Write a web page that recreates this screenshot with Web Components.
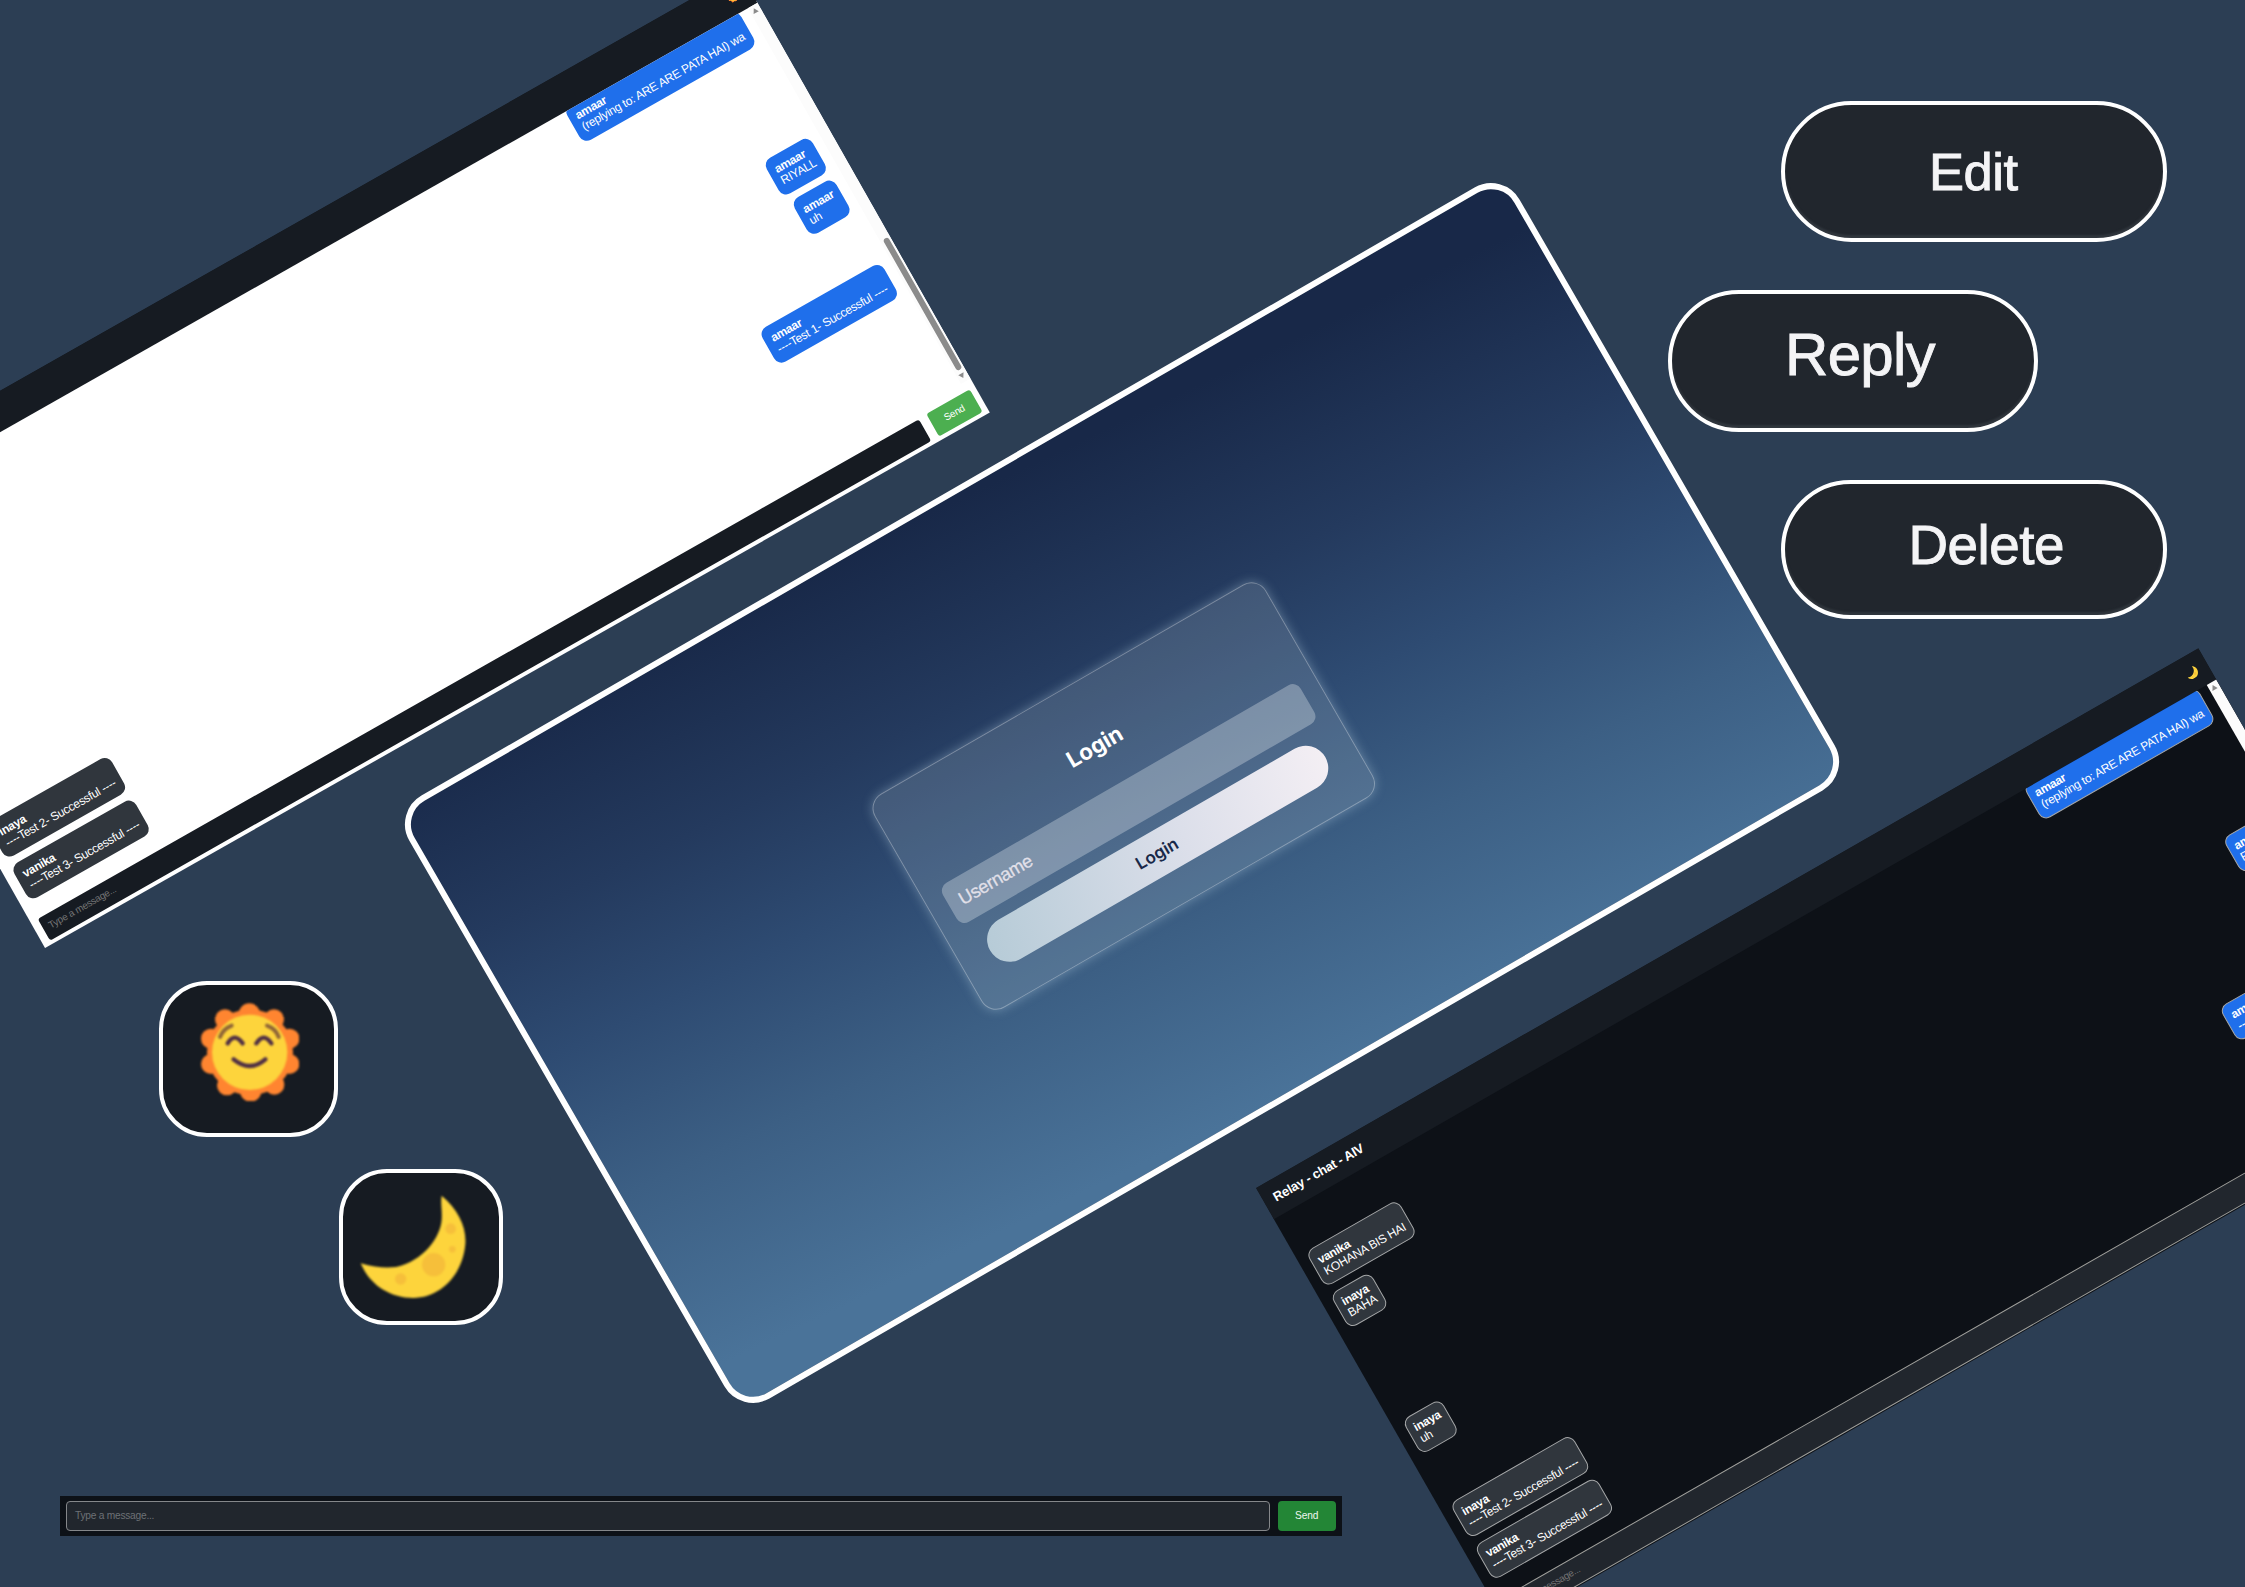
<!DOCTYPE html>
<html lang="en">
<head>
<meta charset="utf-8">
<title>Relay chat</title>
<style>
html,body{margin:0;height:100%;overflow:hidden;background:#2c3e54}
body{font-family:"Liberation Sans",Arial,sans-serif;color:#fff}
</style>
</head>
<body>
<relay-board></relay-board>
<script>
function define(name, html){
  const t = document.createElement('template');
  t.innerHTML = html;
  customElements.define(name, class extends HTMLElement{
    constructor(){ super(); this.attachShadow({mode:'open'}).append(t.content.cloneNode(true)); }
  });
}

define('sun-icon', `
<style>:host{display:block}svg{display:block;width:100%;height:100%}</style>
<svg viewBox="182 129 296 296">
  <g fill="#ff8530">
    <circle cx="329" cy="277" r="129"/>
    <circle cx="327" cy="162" r="32"/><circle cx="401" cy="178" r="30"/><circle cx="254" cy="178" r="30"/>
    <circle cx="447" cy="236" r="30"/><circle cx="447" cy="312" r="30"/>
    <circle cx="212" cy="236" r="30"/><circle cx="212" cy="312" r="30"/>
    <circle cx="402" cy="374" r="30"/><circle cx="260" cy="376" r="30"/><circle cx="331" cy="393" r="32"/>
  </g>
  <circle cx="328" cy="277" r="113" fill="#fdd43c"/>
  <g fill="none" stroke-linecap="round">
    <g stroke="#8f6537" stroke-width="12"><path d="M239 231Q249 206 274 197"/><path d="M380 197Q406 206 415 231"/></g>
    <g stroke="#4f2f45" stroke-width="13"><path d="M262 250Q282 216 307 250"/><path d="M348 250Q370 216 393 250"/><path d="M280 298Q328 338 375 298"/></g>
  </g>
</svg>`);

define('moon-icon', `
<style>:host{display:block}svg{display:block;width:100%;height:100%}</style>
<svg viewBox="660 704 318 312">
  <path d="M905 706C955 748 980 800 976 852C968 945 900 1012 820 1013C750 1012 690 975 662 909C705 922 740 923 768 920C850 902 902 830 905 778C907 750 901 728 905 706Z" fill="#fdd43c"/>
  <g fill="#f6bf3a"><circle cx="881" cy="913" r="35"/><circle cx="782" cy="956" r="17"/><circle cx="932" cy="805" r="16"/><circle cx="937" cy="867" r="10"/></g>
</svg>`);

define('icon-tile', `
<style>
:host{display:flex;justify-content:center;align-items:flex-start;box-sizing:border-box;border:4px solid #fff;border-radius:48px;background:#161b22}
::slotted(*){filter:blur(.9px)}
</style><slot></slot>`);

define('pill-button', `
<style>
:host{display:flex;align-items:flex-start;box-sizing:border-box;border:4px solid #fff;border-radius:71px;background:#21262d;color:#f4f4f6;line-height:1;white-space:nowrap;box-shadow:inset 0 -3px 2px #30363d;-webkit-text-stroke:.9px #f4f4f6}
</style><slot></slot>`);

define('chat-bubble', `
<style>
:host{display:block;box-sizing:border-box;height:40.4px;padding:7.1px;border-radius:8.5px;background:#30363d;font-size:12px;letter-spacing:-.27px;line-height:13.1px;white-space:nowrap;align-self:flex-start;flex:none}
:host([own]){background:#1f6feb;align-self:flex-end}
:host([blank]){visibility:hidden}
b{display:block}
</style><b><slot name="who"></slot></b><slot></slot>`);

define('chat-window', `
<style>
:host{display:flex;flex-direction:column;box-sizing:border-box;width:1085.5px;height:507px;overflow:hidden;background:linear-gradient(#161b22 34px,#fff 34px)}
header{flex:none;height:35.7px;box-sizing:border-box;background:#161b22;display:flex;justify-content:space-between;align-items:center;padding:0 11px 0 10.8px;font-weight:700;font-size:13.1px;letter-spacing:-.24px}
.icon{width:12.5px;height:12.5px}
.mid{display:flex;height:432.5px;flex:none}
.list{flex:1;display:flex;flex-direction:column;gap:7.95px;overflow:hidden;padding:0 9.9px 0 10.4px;box-sizing:border-box}
.list::before{content:"";flex:none;height:0;margin-bottom:-11.5px}
.bar{width:10.6px;background:#fcfcfc;display:flex;flex-direction:column;align-items:center;padding:3.5px 0;box-sizing:border-box}
.up,.down{border:3px solid transparent;border-top:0;border-bottom:5px solid #8b8b8b}
.down{transform:rotate(180deg)}
.thumb{width:6px;height:151px;border-radius:3px;background:#8b8b8b;margin:260px 0 3.5px 2px}
footer{flex:1;display:flex;box-sizing:border-box;padding:5.3px 5.5px 0 8px;gap:8.6px;align-items:flex-start}
.field{flex:1;height:25px;margin-top:4.2px;box-sizing:border-box;background:#161b22;border-radius:3px;padding-left:6.5px;line-height:24px;font-size:9.9px;letter-spacing:-.27px;color:#757575}
.send{width:50px;height:26.4px;margin-top:3.2px;border-radius:3px;background:#4caf50;font-size:9.9px;letter-spacing:-.2px;line-height:26px;text-align:center}
:host([dark]){background:linear-gradient(#161b22 34px,#0d1117 34px);height:506px}
:host([dark]) .field{background:#21262d;border:1px solid #a0a09c;height:27px;margin-top:4.9px}
:host([dark]) .send,:host([dark]) .down{visibility:hidden}
:host([dark]) .list{padding-left:11px}
:host([dark]) ::slotted(chat-bubble){border:1px solid #a5a7a8;padding:6.1px}
</style>
<header><span><slot name="title"></slot></span><div class="icon"><slot name="icon"></slot></div></header>
<div class="mid"><div class="list"><slot></slot></div><div class="bar"><i class="up"></i><i class="thumb"></i><i class="down"></i></div></div>
<footer><div class="field"><slot name="hint"></slot></div><div class="send"><slot name="send"></slot></div></footer>`);

define('message-bar', `
<style>
:host{display:flex;box-sizing:border-box;background:#0d1117;padding:4.5px 5.5px 4.5px 6px;gap:7.5px}
.field{flex:1;box-sizing:border-box;border:1.5px solid #85878a;border-radius:4px;background:#21262d;color:#6d7176;font-size:10.2px;letter-spacing:-.24px;line-height:28px;padding-left:8px}
.send{width:58.5px;border-radius:4px;background:#238636;font-size:10.2px;letter-spacing:-.1px;line-height:30px;text-align:center;color:#eef5ef}
</style>
<div class="field">Type a message...</div><div class="send">Send</div>`);

define('login-card', `
<style>
:host{display:flex;align-items:center;justify-content:center;box-sizing:border-box;width:1282px;height:696px;border:6px solid #fff;border-radius:33px;background:linear-gradient(184.5deg,#182848 7%,#243a5e 31%,#2e4b72 49%,#3c5f84 69%,#4a7399 94%);font-family:Inter,"Liberation Sans",sans-serif}
.panel{width:452px;height:247px;box-sizing:border-box;margin-top:7.6px;border:1px solid rgba(255,255,255,.3);border-radius:17px;background:rgba(240,255,255,.14);box-shadow:0 0 11px rgba(200,228,240,.36);display:flex;flex-direction:column;align-items:center}
h2{margin:51.5px 0 32px;height:25.7px;line-height:25.7px;font-size:22.4px;font-weight:700;padding-right:1px}
.user{width:413px;height:44.5px;border-radius:9px;background:rgba(250,255,255,.29);box-sizing:border-box;padding-left:12.5px;line-height:43px;font-family:"Liberation Sans",sans-serif;font-size:18.4px;letter-spacing:-.35px;color:#e2e0e9;-webkit-text-stroke:.25px #e2e0e9;margin-bottom:13.3px}
.go{width:387px;height:45px;border-radius:23px;background:linear-gradient(100deg,#b6cbd7,#dcdfea 58%,#f4eff4);color:#182848;text-align:center;line-height:44px;font-size:17.2px;font-weight:600}
</style>
<div class="panel"><h2>Login</h2><div class="user">Username</div><div class="go">Login</div></div>`);

define('relay-board', `
<style>
:host{display:block;position:relative;width:2245px;height:1587px;overflow:hidden}
:host>*{position:absolute}
.light,.darkw{transform-origin:0 0}
.light{left:-204.9px;top:506.7px;transform:rotate(-29.55deg)}
.darkw{left:1256px;top:1188px;transform:rotate(-29.8deg)}
login-card{left:481px;top:445px;transform:rotate(-30deg)}
.edit{left:1780.5px;top:100.5px;width:386.5px;height:141.5px;padding:41.4px 0 0 144.5px;font-size:52.5px;letter-spacing:-.5px}
.reply{left:1668px;top:290px;width:370px;height:141.5px;padding:31.2px 0 0 113px;font-size:60px;letter-spacing:-.7px}
.delete{left:1780.5px;top:479.7px;width:386.5px;height:139.3px;padding:34.3px 0 0 124px;font-size:54.8px;letter-spacing:-.5px}
.sun{left:159px;top:981px;width:179px;height:156px}
.sun sun-icon{width:98.7px;height:98.7px;margin-top:17.7px;margin-left:3px}
.moon{left:339px;top:1169.4px;width:164.2px;height:155.6px}
.moon moon-icon{width:106px;height:104px;margin-top:21.5px;margin-right:16px}
message-bar{left:60px;top:1496px;width:1281.5px;height:39.7px}
.icon{width:12.5px;height:12.5px}
</style>
<chat-window class="light">
  <sun-icon class="icon" slot="icon"></sun-icon>
  <chat-bubble own><span slot="who">amaar</span>(replying to: ARE ARE PATA HAI) wa</chat-bubble>
  <chat-bubble blank></chat-bubble>
  <chat-bubble blank></chat-bubble>
  <chat-bubble own><span slot="who">amaar</span>RIYALL</chat-bubble>
  <chat-bubble own><span slot="who">amaar</span>uh</chat-bubble>
  <chat-bubble blank></chat-bubble>
  <chat-bubble own><span slot="who">amaar</span>----Test 1- Successful ----</chat-bubble>
  <chat-bubble><span slot="who">inaya</span>----Test 2- Successful ----</chat-bubble>
  <chat-bubble><span slot="who">vanika</span>----Test 3- Successful ----</chat-bubble>
  <span slot="hint">Type a message...</span><span slot="send">Send</span>
</chat-window>
<chat-window class="darkw" dark>
  <span slot="title">Relay - chat - AIV</span>
  <moon-icon class="icon" slot="icon"></moon-icon>
  <chat-bubble own><span slot="who">amaar</span>(replying to: ARE ARE PATA HAI) wa</chat-bubble>
  <chat-bubble><span slot="who">vanika</span>KOHANA BIS HAI</chat-bubble>
  <chat-bubble><span slot="who">inaya</span>BAHA</chat-bubble>
  <chat-bubble own><span slot="who">amaar</span>RIYALL</chat-bubble>
  <chat-bubble blank></chat-bubble>
  <chat-bubble><span slot="who">inaya</span>uh</chat-bubble>
  <chat-bubble own><span slot="who">amaar</span>----Test 1- Successful ----</chat-bubble>
  <chat-bubble><span slot="who">inaya</span>----Test 2- Successful ----</chat-bubble>
  <chat-bubble><span slot="who">vanika</span>----Test 3- Successful ----</chat-bubble>
  <span slot="hint">Type a message...</span>
</chat-window>
<login-card></login-card>
<pill-button class="edit">Edit</pill-button>
<pill-button class="reply">Reply</pill-button>
<pill-button class="delete">Delete</pill-button>
<icon-tile class="sun"><sun-icon></sun-icon></icon-tile>
<icon-tile class="moon"><moon-icon></moon-icon></icon-tile>
<message-bar></message-bar>`);
</script>
</body>
</html>
